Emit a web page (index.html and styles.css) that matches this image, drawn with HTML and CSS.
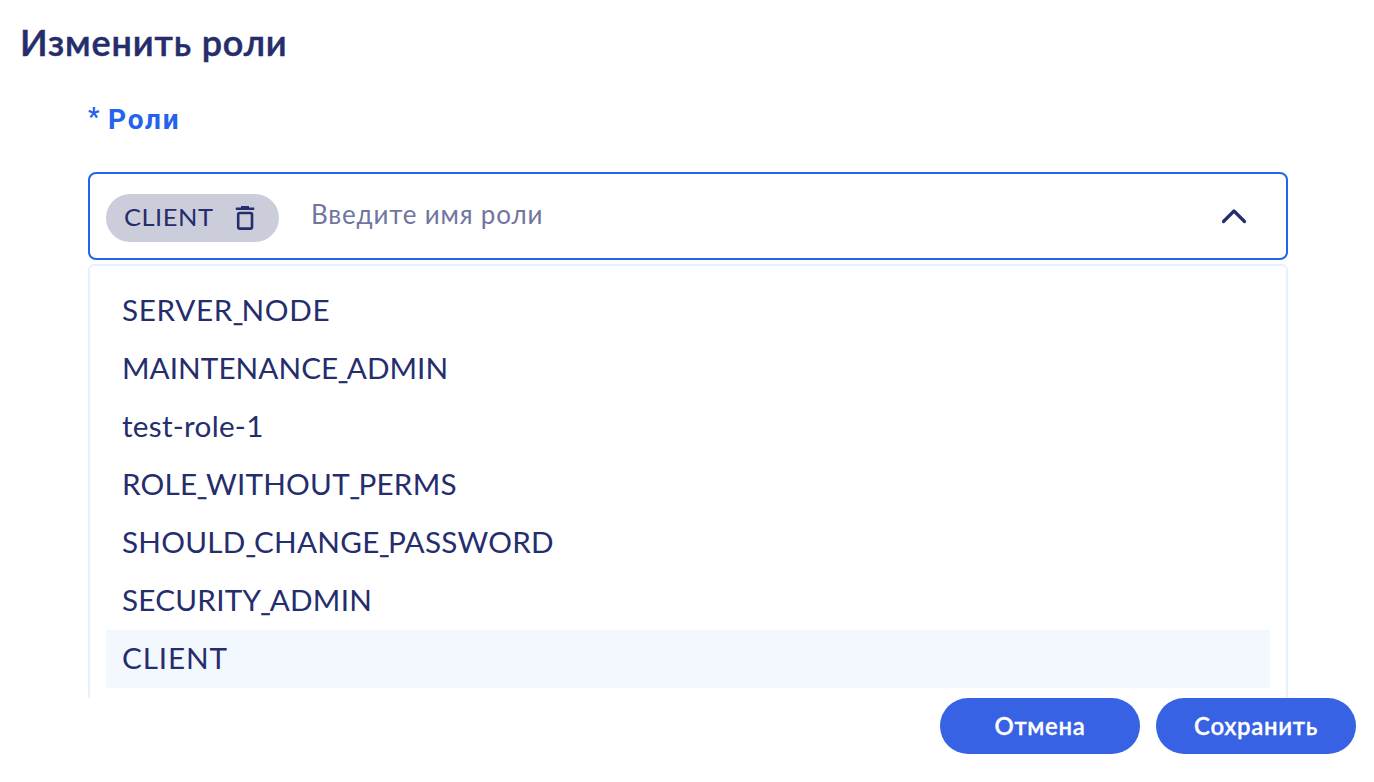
FILE: index.html
```html
<!DOCTYPE html>
<html lang="ru">
<head>
<meta charset="utf-8">
<title>Изменить роли</title>
<link rel="stylesheet" href="styles.css">
</head>
<body>
<main class="dialog">
  <h1 class="title"><span>Изменить роли</span></h1>
  <section class="content">
    <label class="label" for="role"><span class="star">*</span><span class="label-text">Роли</span></label>
    <div class="select">
      <div class="chip"><span class="chip-text">CLIENT</span>
        <svg class="trash" viewBox="0 0 20 24" width="20" height="24"><path d="M.8 2.800h18.400M6 1.200h8" fill="none" stroke="currentColor" stroke-width="2.4"/><rect x="3.200" y="7" width="13.800" height="15.600" rx="1.500" fill="none" stroke="currentColor" stroke-width="2.600"/></svg>
      </div>
      <span class="placeholder" id="role">Введите имя роли</span>
      <svg class="chevron" viewBox="0 0 26 16" width="26" height="16"><path d="M2.500 13.500 13 3l10.500 10.500" fill="none" stroke="currentColor" stroke-width="3.200" stroke-linecap="round" stroke-linejoin="round"/></svg>
    </div>
    <ul class="menu">
      <li class="option"><span class="name w1">SERVER<i class="u">_</i>NODE</span></li>
      <li class="option"><span class="name w2">MAINTENANCE<i class="u">_</i>ADMIN</span></li>
      <li class="option"><span class="name w3">test-role-1</span></li>
      <li class="option"><span class="name w4">ROLE<i class="u">_</i>WITHOUT<i class="u">_</i>PERMS</span></li>
      <li class="option"><span class="name w5">SHOULD<i class="u">_</i>CHANGE<i class="u">_</i>PASSWORD</span></li>
      <li class="option"><span class="name w6">SECURITY<i class="u">_</i>ADMIN</span></li>
      <li class="option selected"><span class="name w7">CLIENT</span></li>
    </ul>
  </section>
  <footer class="actions">
    <button class="button"><span class="b1">Отмена</span></button>
    <button class="button"><span class="b2">Сохранить</span></button>
  </footer>
</main>
</body>
</html>
```
FILE: styles.css
```css
* { box-sizing: border-box; }
body { margin: 0; background: #fff; color: #252d6c; font-family: Lato, "Noto Sans", sans-serif; }
.dialog { height: 782px; display: flex; flex-direction: column; overflow: hidden; }
.title { margin: 0; height: 86px; padding: 0 0 0 20px; font-size: 36px; line-height: 84px; font-weight: 600; letter-spacing: 0.85px; white-space: nowrap; -webkit-text-stroke: 0.5px currentColor; }
.content { height: 612px; padding: 0 86px 0 88px; overflow: hidden; }
.label { display: flex; gap: 9px; height: 86px; font: 700 28px/68px Roboto, sans-serif; color: #2563eb; letter-spacing: 1.8px; }
.star { width: 11px; font-size: 25px; line-height: 64px; }
.select { display: flex; align-items: center; height: 88px; padding: 4px 39px 0 16px; border: 2px solid #2563eb; border-radius: 8px; }
.chip { display: flex; align-items: center; width: 173px; height: 48px; padding-left: 18px; border-radius: 24px; background: #cccddb; font-size: 24px; }
.chip-text { flex: none; width: 111px; line-height: 44px; padding-bottom: 3px; letter-spacing: 0.5px; transform: scaleX(1.06); transform-origin: left; }
.trash { display: block; }
.placeholder { margin: -9px 0 0 32px; flex: 1; font-size: 26px; line-height: 32px; color: #71769f; letter-spacing: 0.83px; white-space: nowrap; }
.chevron { display: block; margin-top: -5px; }
.menu { height: 500px; margin: 4px 0 0; padding: 16px; list-style: none; border: 2px solid #e6f0ff; border-radius: 6px; }
.option { height: 58px; padding-left: 16px; font-size: 28px; line-height: 57px; white-space: nowrap; }
.selected { background: #f3f8ff; }
.name { display: inline-block; transform: scaleX(1.06); transform-origin: left; }
.w1 { letter-spacing: 0.62px; }
.w2 { letter-spacing: 0.05px; }
.w3 { letter-spacing: 0.25px; }
.w4, .w5, .w6 { letter-spacing: 0.22px; }
.w7 { letter-spacing: 0.8px; }
.u { display: inline-block; width: 8px; font-style: normal; letter-spacing: 0; transform: scaleX(0.7); transform-origin: left; -webkit-text-stroke: 0.6px currentColor; }
.actions { display: flex; justify-content: flex-end; gap: 16px; padding-right: 18px; }
.button { width: 200px; height: 56px; padding: 0; border: 0; border-radius: 28px; background: #3662e3; color: #fff; font: 600 24px/56px Lato, "Noto Sans", sans-serif; letter-spacing: 0.65px; -webkit-text-stroke: 0.3px currentColor; }
```
